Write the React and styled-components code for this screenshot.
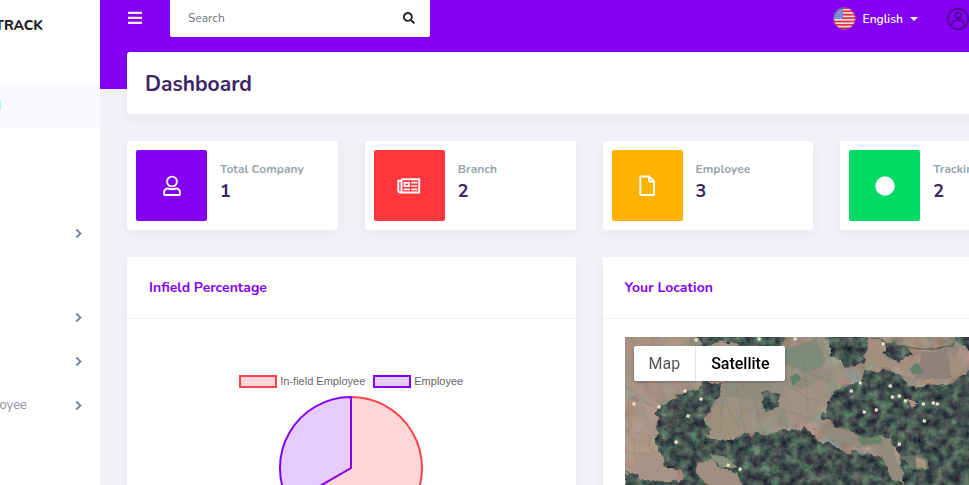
import React from "react";
import styled, { createGlobalStyle } from "styled-components";
import { FaSearch } from "react-icons/fa";

const purple = "#8500f2";
const ink = "#3d2566";

const GlobalStyle = createGlobalStyle`
  * { box-sizing: border-box; }
  body {
    margin: 0;
    overflow: hidden;
    background: #f1f2f7;
    font-family: Nunito, Lato, "Open Sans", sans-serif;
    font-size: 13px;
  }
  button, input { font: inherit; border: 0; background: none; padding: 0; }
  h1, h2, p { margin: 0; }
`;

const Shell = styled.div`
  display: flex;
  height: 100vh;
  overflow: hidden;
`;

const Sidebar = styled.nav`
  flex: 0 0 100px;
  background: #fff;
  overflow: hidden;
`;

const Clip = styled.span`
  display: flex;
  justify-content: flex-end;
  width: ${(p) => p.$end}px;
  overflow: hidden;
  white-space: nowrap;
`;

const Brand = styled.div`
  height: 84px;
  padding-top: 17px;
  color: #222;
  font-size: 14px;
  line-height: 18px;
  font-weight: 800;
`;

const NavItem = styled.a`
  display: flex;
  align-items: center;
  justify-content: space-between;
  height: 44px;
  padding-right: 17px;
  margin-top: ${(p) => p.$gap || 0}px;
  background: ${(p) => (p.$active ? "#f8f9fc" : "transparent")};
  color: ${(p) => (p.$active ? "#6cc4ff" : "#8b8f98")};
  text-decoration: none;
  svg { width: 9px; height: 11px; }
`;

const Main = styled.main`
  flex: 1;
  min-width: 0;
  overflow: hidden;
`;

const Band = styled.div`
  height: 89px;
  background: ${purple};
`;

const TopBar = styled.header`
  display: flex;
  align-items: center;
  height: 37px;
  padding-left: 27px;
  color: #fff;
`;

const IconButton = styled.button`
  display: flex;
  color: inherit;
`;

const MenuButton = styled(IconButton)`
  padding-bottom: 2px;
`;

const SearchBox = styled.form`
  display: flex;
  align-items: center;
  width: 260px;
  height: 37px;
  margin-left: 27px;
  padding: 0 15px 2px 18px;
  background: #fff;
  border-radius: 0 0 2px 2px;
  color: #24242c;
  font-size: 12px;
`;

const SearchInput = styled.input`
  flex: 1;
  min-width: 0;
  outline: 0;
  color: #6f7480;
  &::placeholder { color: #6f7480; opacity: 1; }
`;

const TopActions = styled.div`
  display: flex;
  align-items: center;
  gap: 29px;
  margin-left: auto;
`;

const Language = styled.button`
  display: flex;
  align-items: center;
  gap: 7px;
  color: #fff;
  font-size: 12px;
  font-weight: 600;
`;

const Caret = styled.span`
  border: 4px solid transparent;
  border-top-color: #fff;
  border-bottom: 0;
`;

const Content = styled.div`
  display: grid;
  gap: 27px;
  width: calc(100% + 109px);
  margin-top: -37px;
  padding: 0 27px;
`;

const Card = styled.section`
  background: #fff;
  border-radius: 3px;
  box-shadow: 0 4px 12px rgba(40, 40, 70, 0.05);
`;

const TitleCard = styled(Card)`
  padding: 18px 18px 15px;
  h1 {
    color: ${ink};
    font-size: 21px;
    line-height: 29px;
    font-weight: 700;
  }
`;

const Stats = styled.div`
  display: grid;
  grid-template-columns: repeat(4, 1fr);
  gap: 27px;
`;

const StatCard = styled(Card)`
  display: flex;
  gap: 13px;
  padding: 9px;
`;

const StatIcon = styled.div`
  display: flex;
  align-items: center;
  justify-content: center;
  width: 71px;
  height: 71px;
  border-radius: 2px;
  background: ${(p) => p.$color};
  svg { display: block; }
`;

const StatText = styled.div`
  padding-top: 9px;
  white-space: nowrap;
`;

const StatLabel = styled.p`
  color: #98a6ad;
  font-size: 12px;
  line-height: 20px;
  font-weight: 700;
`;

const StatValue = styled.p`
  color: ${ink};
  font-size: 18px;
  line-height: 24px;
  font-weight: 700;
`;

const Panels = styled.div`
  display: grid;
  grid-template-columns: repeat(2, 1fr);
  gap: 27px;
`;

const PanelHead = styled.header`
  padding: 20px 22px;
  border-bottom: 1px solid #f4f4f8;
  h2 {
    color: ${purple};
    font-size: 14px;
    line-height: 21px;
    font-weight: 700;
  }
`;

const ChartBody = styled.div`
  display: flex;
  flex-direction: column;
  align-items: center;
  gap: 7px;
  padding: 55px 22px 22px;
`;

const Legend = styled.div`
  display: flex;
  gap: 8px;
`;

const LegendItem = styled.span`
  display: flex;
  align-items: center;
  gap: 3px;
  color: #666;
  font: 11px/14px "Liberation Sans", Arial, sans-serif;
`;

const Swatch = styled.i`
  width: 38px;
  height: 13px;
  border: 2px solid ${(p) => p.$line};
  background: ${(p) => p.$fill};
`;

const MapBody = styled.div`
  padding: 18px 22px 22px;
`;

const MapFrame = styled.div`
  position: relative;
  overflow: hidden;
  background: #a08f80;
  > svg { display: block; width: 100%; height: auto; }
`;

const MapSwitch = styled.div`
  position: absolute;
  top: 9px;
  left: 9px;
  display: flex;
  background: #fff;
  border-radius: 2px;
  box-shadow: 0 1px 3px rgba(0, 0, 0, 0.3);
`;

const MapType = styled.button`
  height: 35px;
  padding: 0 15px;
  color: ${(p) => (p.$active ? "#000" : "#565656")};
  font: ${(p) => (p.$active ? 500 : 400)} 16px Roboto, sans-serif;
  & + & { border-left: 1px solid #e6e6e6; }
`;

function Chevron() {
  return (
    <svg viewBox="0 0 9 11" fill="none" stroke="#75819a" strokeWidth="1.8" aria-hidden="true">
      <path d="M2.3 1.5 6.5 5.5 2.3 9.5" />
    </svg>
  );
}

function Bars() {
  return (
    <svg width="16" height="14" viewBox="0 0 16 14" fill="#f4e9ff" aria-hidden="true">
      <path d="M1 .8h14v2.300H1zM1 5.800h14v2.300H1zM1 10.800h14v2.300H1z" />
    </svg>
  );
}

function Flag() {
  return (
    <svg width="23" height="23" viewBox="0 0 23 23" aria-hidden="true">
      <defs>
        <clipPath id="flag"><circle cx="11.5" cy="11.5" r="11" /></clipPath>
      </defs>
      <g clipPath="url(#flag)">
        <rect width="23" height="23" fill="#f3dcdf" />
        {[0, 1, 2, 3, 4, 5, 6].map((i) => (
          <rect key={i} y={i * 3.4} width="23" height="1.8" fill="#e0364a" />
        ))}
        <rect width="10" height="12" fill="#7183cf" />
        <path d="M3 3h6M2 5.5h7M1 8h8M1 10.5h8" stroke="#a9b5e8" strokeWidth="1" strokeDasharray="1 1" />
      </g>
      <circle cx="11.5" cy="11.5" r="10.8" fill="none" stroke="#5b2368" strokeOpacity=".6" strokeWidth=".9" />
    </svg>
  );
}

function Avatar() {
  return (
    <svg width="22" height="22" viewBox="0 0 22 22" fill="none" stroke="#43068a" strokeWidth="1.4" aria-hidden="true">
      <circle cx="11" cy="11" r="10.2" />
      <circle cx="11" cy="7.3" r="2.8" />
      <path d="M4.2 18.3c.4-4 3-6.3 6.8-6.3s6.4 2.3 6.8 6.3" />
    </svg>
  );
}

function UserIcon() {
  return (
    <svg width="20" height="22" viewBox="0 0 20 22" fill="none" stroke="#fff" strokeWidth="1.9" aria-hidden="true">
      <circle cx="10" cy="6.500" r="4.900" />
      <path d="M5.500 13.400C3.200 13.900 2 15.600 2 17.800v.9c0 .7.500 1.300 1.300 1.300h13.400c.8 0 1.300-.6 1.300-1.300v-.9c0-2.200-1.200-3.900-3.500-4.400-1.200.5-2.800.8-4.500.8s-3.300-.3-4.500-.8z" />
    </svg>
  );
}

function NewsIcon() {
  return (
    <svg width="24" height="16" viewBox="0 0 24 16" fill="none" stroke="#fff" aria-hidden="true">
      <path d="M4.500 1.300h17.700v13.200H3.300c-1.200 0-2-.7-2-1.900V2.700h3M4.500 1.300v11.500c0 1-.4 1.700-1.200 1.700" strokeWidth="1.900" />
      <path d="M7.500 4.800h4.500v3.400H7.500zM6.700 11.400h6.100M14.300 4.700h6M14.300 8h6M14.300 11.400h6" strokeWidth="1.700" />
    </svg>
  );
}

function FileIcon() {
  return (
    <svg width="18" height="22" viewBox="0 0 18 22" fill="none" stroke="#fff" strokeWidth="1.900" aria-hidden="true">
      <path d="M3.300 1.500h8l4.700 4.800v12.700c0 .6-.4 1-1 1H3.300c-.6 0-1-.4-1-1V2.500c0-.6.4-1 1-1z" />
      <path d="M11 1.500v4c0 .6.400 1 1 1h4" />
    </svg>
  );
}

function DotIcon() {
  return (
    <svg width="20" height="20" viewBox="0 0 20 20" aria-hidden="true">
      <circle cx="10" cy="10" r="9.700" fill="#fff" />
    </svg>
  );
}

function Pie() {
  return (
    <svg width="146" height="146" viewBox="-73 -73 146 146" strokeWidth="2" role="img" aria-label="Infield percentage">
      <path d="M0 0V-71A71 71 0 1 1-61.500 35.500Z" fill="#ffd7d8" stroke="#ff4248" />
      <path d="M0 0-61.500 35.500A71 71 0 0 1 0-71Z" fill="#e6ccfc" stroke={purple} strokeLinejoin="round" />
    </svg>
  );
}

const houses = [
  [63, 79], [51, 105], [60, 54], [76, 62], [9, 67], [115, 132], [103, 128], [71, 3], [134, 2],
  [170, 2], [258, 7], [235, 46], [226, 54], [239, 75], [251, 73], [267, 60], [274, 59], [265, 49],
  [298, 67], [308, 66], [299, 84], [312, 67], [274, 107], [280, 64], [34, 70],
];

function Satellite() {
  return (
    <svg viewBox="0 0 404 260" role="img" aria-label="Satellite view">
      <defs>
        <filter id="wood" x="-5%" y="-5%" width="110%" height="110%" colorInterpolationFilters="sRGB">
          <feTurbulence type="fractalNoise" baseFrequency="0.09" numOctaves="3" seed="8" result="edge" />
          <feDisplacementMap in="SourceGraphic" in2="edge" scale="12" xChannelSelector="R" yChannelSelector="G" result="shape" />
          <feTurbulence type="fractalNoise" baseFrequency="0.11" numOctaves="5" seed="3" />
          <feColorMatrix values="0.1 0.45 0 0 -0.01  -0.08 0.6 0 0 0.065  0.02 0.38 0 0 0.11  0 0 0 0 1" />
          <feGaussianBlur stdDeviation="0.4" />
          <feComposite in2="shape" operator="in" />
        </filter>
        <filter id="soil" x="0" y="0" width="100%" height="100%" colorInterpolationFilters="sRGB">
          <feTurbulence type="fractalNoise" baseFrequency="0.06" numOctaves="5" seed="12" />
          <feColorMatrix values="0.3 0 0 0 0.47  0.1 0.25 0 0 0.38  0.1 0.2 0.1 0 0.3  0 0 0 0 1" />
        </filter>
        <filter id="rough" x="-5%" y="-5%" width="110%" height="110%">
          <feTurbulence type="fractalNoise" baseFrequency="0.08" numOctaves="3" seed="5" />
          <feDisplacementMap in="SourceGraphic" scale="6" xChannelSelector="R" yChannelSelector="G" />
          <feGaussianBlur stdDeviation="0.6" />
        </filter>
      </defs>
      <rect width="404" height="260" filter="url(#soil)" />
      <g filter="url(#rough)">
        <path d="M0 0H65L78 40 30 68 0 50Z" fill="#ab9585" opacity=".65" />
        <path d="M0 60 28 70 34 100 52 150H0Z" fill="#b39b8a" opacity=".65" />
        <path d="M155 12 200 5 215 40 205 55 195 78 160 92 96 98 82 85 90 65 130 40Z" fill="#92917f" opacity=".65" />
        <path d="M155 12 192 0 200 25 185 35 160 28Z" fill="#768b76" opacity=".75" />
        <path d="M98 43 145 42 140 62 100 60Z" fill="#8a8c78" opacity=".7" />
        <path d="M155 60 200 42 205 62 195 75 165 88Z" fill="#a59182" opacity=".7" />
        <path d="M88 68 118 65 132 95 84 98Z" fill="#9d917d" opacity=".8" />
        <path d="M242 3 255 2 262 22 285 20 312 12 340 20 330 42 290 45 270 30 240 28Z" fill="#a58f7e" opacity=".85" />
        <path d="M297 15 322 12 326 40 290 43Z" fill="#877c7b" opacity=".7" />
        <path d="M284 30 292 27 298 35 288 38ZM165 40 172 37 178 43 168 49Z" fill="#628066" />
        <path d="M0 50 28 70M98 62 94 96M112 50 120 96M150 42 194 66M160 28 205 44M145 70 188 82M128 60 138 96M177 18 184 75M104 72 115 91" fill="none" stroke="#747b6a" strokeWidth="1" opacity=".4" />
        <path d="M8 0 40 62M25 0 58 52M0 92 37 100M0 112 44 126M2 76 12 126M18 70 31 135" fill="none" stroke="#8b7768" strokeWidth="1" opacity=".35" />
      </g>
      <g filter="url(#wood)">
        <path d="M65-8H160L156 8 120 10 112 4 76 8Z" />
        <path d="M200-8H243L239 27 221 29 206 18Z" />
        <path d="M258 5 276 6 286 16 275 24 260 20Z" />
        <path d="M325-8H410V5L349 20 336 8Z" />
        <path d="M31 72 46 63 61 56 78 45 98 45 96 57 86 67 82 82 83 100 104 102 121 97 144 98 166 92 180 90 196 104 222 115 254 116 266 142 276 145 290 270H60L0 270V133L20 142 55 146 56 131 38 129 32 110Z" />
        <path d="M197 80 208 53 232 47 245 33 270 35 287 49 322 50 348 30 410 28V270H270L278 140 272 116 265 98 255 106 228 102 213 94Z" />
        <path d="M136 55 152 54 153 71 139 73Z" />
      </g>
      <g filter="url(#rough)">
        <path d="M0 128 30 120 40 132 54 134 53 143 30 144Z" fill="#a89484" />
        <path d="M73 126 88 122 91 129 112 136 120 152H86L78 144 71 136Z" fill="#a08e7f" />
        <path d="M85 118 103 121 112 131 94 130Z" fill="#89907b" />
        <path d="M196 86 218 91 238 101 256 99 264 102 278 138 273 143 264 137 252 111 226 110 199 96Z" fill="#928b7b" />
        <path d="M232 101 254 98 258 107 238 108Z" fill="#668463" opacity=".9" />
        <path d="M275 120 294 119 304 124 302 132 284 131Z" fill="#748171" opacity=".8" />
        <path d="M280 61 294 68 286 72ZM291 121 301 124 300 132 291 129Z" fill="#a99480" />
        <path d="M245 0Q285 14 310 12T325 0" fill="none" stroke="#51614f" />
      </g>
      <g fill="#e8ddcd">
        {houses.map(([x, y]) => (
          <path key={`${x}-${y}`} d={`M${x - 1} ${y - 2}l3 1-1 3-3-1z`} />
        ))}
      </g>
    </svg>
  );
}

const navItems = [
  { label: "Dashboard", end: 1, active: true },
  { label: "", end: 0, gap: 83 },
  { label: "", end: 0, gap: 40 },
  { label: "", end: 0 },
  { label: "Employee", end: 27 },
];

const stats = [
  { label: "Total Company", value: 1, color: purple, Icon: UserIcon },
  { label: "Branch", value: 2, color: "#ff373d", Icon: NewsIcon },
  { label: "Employee", value: 3, color: "#ffb300", Icon: FileIcon },
  { label: "Tracking", value: 2, color: "#00dc63", Icon: DotIcon },
];

export default function App() {
  return (
    <>
      <GlobalStyle />
      <Shell>
        <Sidebar>
          <Brand><Clip $end={43}>TRACK</Clip></Brand>
          {navItems.map((item, i) => (
            <NavItem key={i} href="#" $gap={item.gap} $active={item.active}>
              <Clip $end={item.end}>{item.label}</Clip>
              {!item.active && <Chevron />}
            </NavItem>
          ))}
        </Sidebar>
        <Main>
          <Band>
            <TopBar>
              <MenuButton aria-label="Toggle menu"><Bars /></MenuButton>
              <SearchBox role="search">
                <SearchInput type="text" placeholder="Search" aria-label="Search" />
                <IconButton type="button" aria-label="Submit search"><FaSearch size={12} /></IconButton>
              </SearchBox>
              <TopActions>
                <Language><Flag />English<Caret /></Language>
                <IconButton aria-label="Account"><Avatar /></IconButton>
              </TopActions>
            </TopBar>
          </Band>
          <Content>
            <TitleCard><h1>Dashboard</h1></TitleCard>
            <Stats>
              {stats.map(({ label, value, color, Icon }) => (
                <StatCard key={label}>
                  <StatIcon $color={color}><Icon /></StatIcon>
                  <StatText>
                    <StatLabel>{label}</StatLabel>
                    <StatValue>{value}</StatValue>
                  </StatText>
                </StatCard>
              ))}
            </Stats>
            <Panels>
              <Card>
                <PanelHead><h2>Infield Percentage</h2></PanelHead>
                <ChartBody>
                  <Legend>
                    <LegendItem><Swatch $line="#ff4248" $fill="#ffd7d8" />In-field Employee</LegendItem>
                    <LegendItem><Swatch $line={purple} $fill="#e6ccfc" />Employee</LegendItem>
                  </Legend>
                  <Pie />
                </ChartBody>
              </Card>
              <Card>
                <PanelHead><h2>Your Location</h2></PanelHead>
                <MapBody>
                  <MapFrame>
                    <Satellite />
                    <MapSwitch>
                      <MapType>Map</MapType>
                      <MapType $active>Satellite</MapType>
                    </MapSwitch>
                  </MapFrame>
                </MapBody>
              </Card>
            </Panels>
          </Content>
        </Main>
      </Shell>
    </>
  );
}
